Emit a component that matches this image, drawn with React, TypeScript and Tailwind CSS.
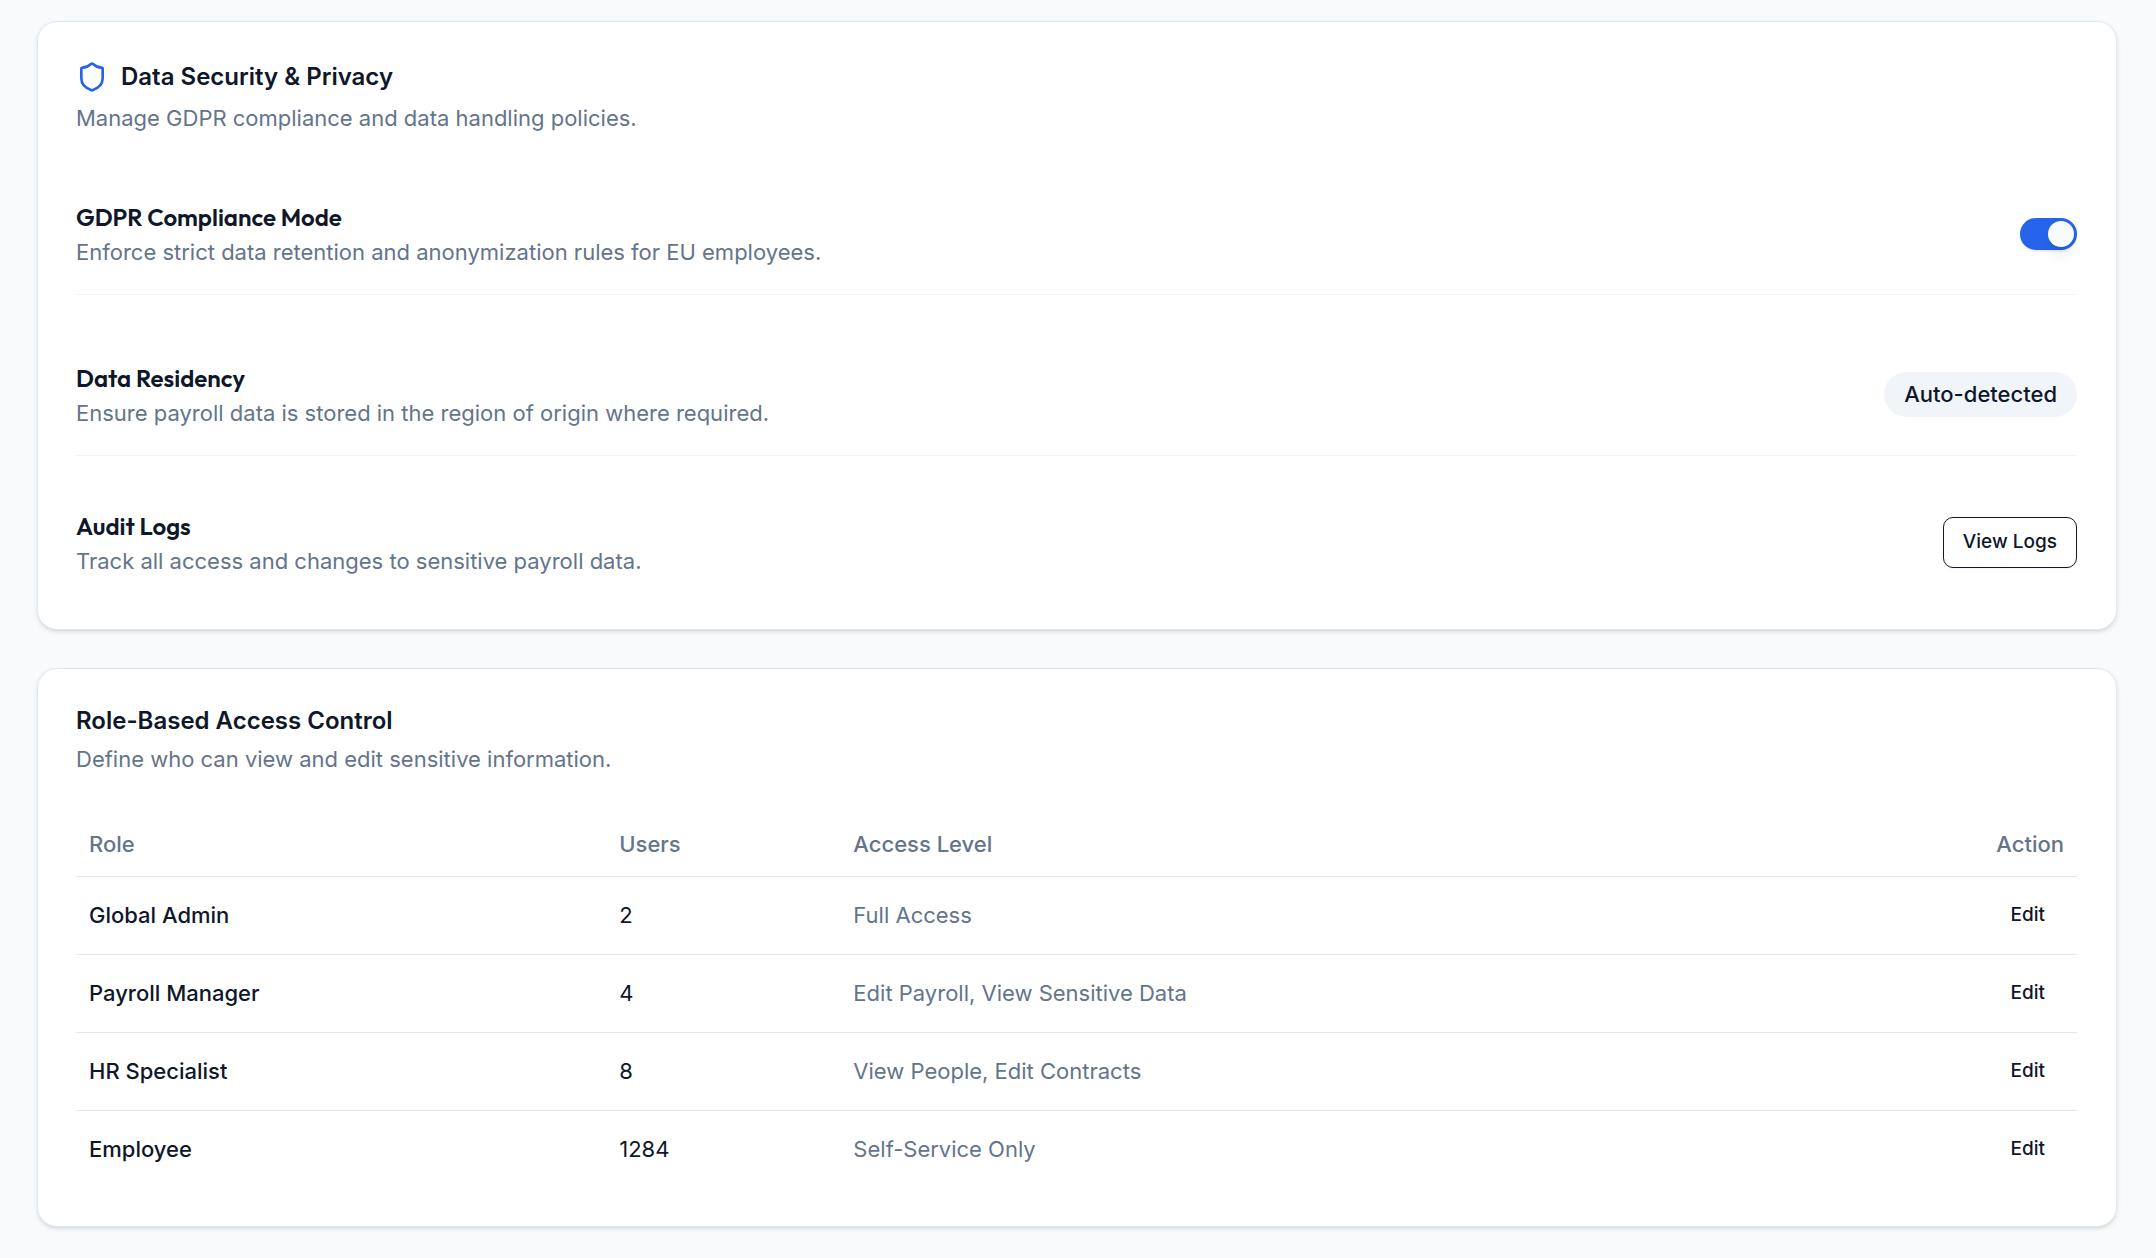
import { useState, type ReactNode } from "react";
import { Shield } from "lucide-react";

const roles = [
  { role: "Global Admin", users: 2, access: "Full Access" },
  { role: "Payroll Manager", users: 4, access: "Edit Payroll, View Sensitive Data" },
  { role: "HR Specialist", users: 8, access: "View People, Edit Contracts" },
  { role: "Employee", users: 1284, access: "Self-Service Only" },
];

function Card({ title, icon, description, children }: { title: string; icon?: ReactNode; description: string; children: ReactNode }) {
  return (
    <section className="rounded-[20px] border border-[#e2e8f0] bg-white py-[38px] pr-[39px] pl-[38px] shadow-[0_2px_5px_rgb(0_0_0/0.1),0_2px_3px_-2px_rgb(0_0_0/0.1)]">
      <header className="mb-[38px] flex flex-col gap-2">
        <h2 className="flex items-center gap-[13px] text-[24px] leading-7 font-semibold">
          {icon}
          {title}
        </h2>
        <p className="text-[22px] leading-8 text-[#64748b]">{description}</p>
      </header>
      {children}
    </section>
  );
}

function Setting({ title, description, last, children }: { title: string; description: string; last?: boolean; children: ReactNode }) {
  return (
    <div className={last ? "flex items-center justify-between py-[13px]" : "flex items-center justify-between border-b border-[#f1f5f9] pt-[26px] pb-[25px]"}>
      <div>
        <h3 className="font-[Outfit,Lato,sans-serif] text-[24px] leading-[38px] font-semibold">{title}</h3>
        <p className="text-[22px] leading-[33px] text-[#64748b]">{description}</p>
      </div>
      {children}
    </div>
  );
}

export default function App() {
  const [gdpr, setGdpr] = useState(true);
  return (
    <main className="flex min-h-screen flex-col gap-[38px] bg-[#f8fafc] pt-[21px] pr-[39px] pb-6 pl-[37px] font-[Inter,sans-serif] text-[#0f172a]">
      <Card
        title="Data Security & Privacy"
        icon={
          <span className="py-px text-[#2563eb]">
            <Shield className="size-8" aria-hidden="true" />
          </span>
        }
        description="Manage GDPR compliance and data handling policies."
      >
        <div className="flex flex-col gap-[38px]">
          <Setting title="GDPR Compliance Mode" description="Enforce strict data retention and anonymization rules for EU employees.">
            <input
              type="checkbox"
              role="switch"
              aria-label="GDPR Compliance Mode"
              checked={gdpr}
              onChange={(e) => setGdpr(e.target.checked)}
              className="flex h-8 w-[57px] cursor-pointer appearance-none items-center rounded-full bg-[#e2e8f0] p-[3px] shadow-sm before:size-[26px] before:rounded-full before:bg-[#f8fafc] before:shadow-lg before:content-[''] checked:justify-end checked:bg-[#2563eb]"
            />
          </Setting>
          <Setting title="Data Residency" description="Ensure payroll data is stored in the region of origin where required.">
            <span className="rounded-full bg-[#f1f5f9] px-5 py-[6px] text-[22px] leading-[33px] font-medium">Auto-detected</span>
          </Setting>
          <Setting title="Audit Logs" description="Track all access and changes to sensitive payroll data." last>
            <button type="button" className="h-[51px] cursor-pointer rounded-[10px] border border-[#0f172a] bg-white px-[19px] text-[19px] font-medium shadow-xs">
              View Logs
            </button>
          </Setting>
        </div>
      </Card>

      <Card title="Role-Based Access Control" description="Define who can view and edit sensitive information.">
        <table className="w-full table-fixed border-collapse text-left text-[22px] leading-8">
          <thead>
            <tr className="h-[63px] border-b border-[#e2e8f0] text-[#64748b]">
              <th scope="col" className="w-[26.5%] px-[13px] font-medium">Role</th>
              <th scope="col" className="w-[11.7%] px-[13px] font-medium">Users</th>
              <th scope="col" className="px-[13px] font-medium">Access Level</th>
              <th scope="col" className="w-[10%] px-[13px] text-right font-medium">Action</th>
            </tr>
          </thead>
          <tbody>
            {roles.map((r) => (
              <tr key={r.role} className="border-b border-[#e2e8f0] last:border-0">
                <td className="p-[13px] font-medium">{r.role}</td>
                <td className="p-[13px]">{r.users}</td>
                <td className="p-[13px] text-[#64748b]">{r.access}</td>
                <td className="p-[13px] text-right">
                  <button type="button" aria-label={`Edit ${r.role}`} className="ml-auto block h-[51px] cursor-pointer rounded-[10px] px-[19px] text-[19px] font-medium">
                    Edit
                  </button>
                </td>
              </tr>
            ))}
          </tbody>
        </table>
      </Card>
    </main>
  );
}
